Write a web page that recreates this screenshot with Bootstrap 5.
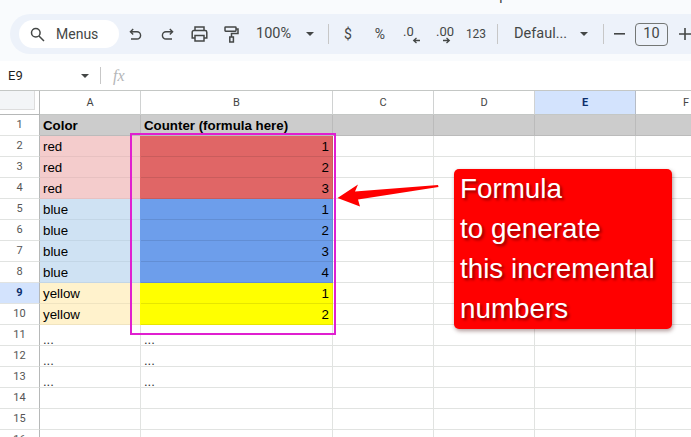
<!DOCTYPE html>
<html lang="en">
<head>
<meta charset="utf-8">
<title>Sheet</title>
<link href="https://cdn.jsdelivr.net/npm/bootstrap@5.3.0/dist/css/bootstrap.min.css" rel="stylesheet">
<style>
html,body{margin:0;background:#fff;overflow:hidden}
.page{position:relative;width:691px;height:437px;overflow:hidden;font-family:Roboto,sans-serif;color:#444746}
.topbar{height:61px;background:#f9fbfd}
.menuline{height:3px;margin-bottom:11px;padding-left:72px;overflow:hidden;font-size:14px;white-space:nowrap;color:#444;word-spacing:10px;letter-spacing:.2px}
.menuline span{display:block;margin-top:-12px;line-height:14px}
.band{height:40px;margin-left:10px;padding-left:9px;background:#edf2fa;border-radius:20px 0 0 20px;white-space:nowrap}
.pill{width:100px;height:28px;padding-left:11px;background:#fff;border-radius:14px;font-size:14px;flex:none}
.pill svg{margin-right:11px}
.tool{width:32px;height:28px;flex:none;font-size:14px}
.tool-sm{font-size:12px}
.tool-minus{width:31px}
.zoomv{width:36px;margin-left:9px;font-size:14.5px;flex:none}
.caret{width:0;height:0;border-left:4px solid transparent;border-right:4px solid transparent;border-top:4px solid #444746;flex:none}
.vsep{width:1px;height:20px;background:#c7c7c7;flex:none}
.dec{width:32px;height:28px;flex:none}
.gap-a{margin-left:14px}
.gap-b{margin-left:3px}
.gap-c{margin-left:5px}
.gap-d{margin-left:12px}
.gap-e{margin-left:15px}
.gap-f{margin-left:1px}
.fname{width:54px;margin-left:16px;font-size:14.5px;flex:none}
.sizebox{width:33px;height:23px;border:1px solid #747775;border-radius:4px;font-size:14.5px;flex:none}
.fxbar{height:29px;background:#fff}
.cellref{width:81px;padding-left:8px;font-size:13px;color:#1f1f1f}
.fxmark{margin-left:12px;font:italic 16px "Liberation Serif",serif;color:#b4b6b8}
.fxsep{margin-left:11px;height:17px}
table.sheet{table-layout:fixed;width:737px;border-collapse:separate;border-spacing:0;font:13.3px "Liberation Sans",Arial,sans-serif;color:#000;border-top:1px solid #c4c7c5}
.sheet td,.sheet th{height:21px;padding:0 3px 1px;border-right:1px solid #e1e3e1;border-bottom:1px solid #e1e3e1;vertical-align:bottom;line-height:16px;overflow:hidden;white-space:nowrap;font-weight:400}
.sheet th.lett{height:24px;padding:0;text-align:center;vertical-align:middle;font:11px Roboto,sans-serif;color:#444;border-bottom-color:#c4c7c5;border-right-color:#d0d2d2}
.sheet th.corner{padding:0;border-right:1px solid #b6b8b8;border-bottom:1px solid #b6b8b8;background:#fff;vertical-align:top}
.cornerfill{display:block;width:35px;height:19px;background:#f3f5f7;border-right:1px solid #ddd;border-bottom:1px solid #ddd}
.sheet th.num{padding:0 0 2px;text-align:center;vertical-align:middle;font:11px Roboto,sans-serif;color:#555;border-right:1px solid #b6b8b8;border-bottom-color:#e1e3e1}
.sheet th.sel{background:#d3e3fd;color:#0b2e6b;font-weight:700}
.sheet th.lett.sel{border-right-color:#b6bcc6}
.h{background:#ccc;font-weight:700!important;border-color:#bbb!important}
.r1{background:#f4cccc;border-color:#e7c1c1!important}.r2{background:#e06666;text-align:right;border-color:#c95c5c!important;box-shadow:-1px 0 0 #e06666}
.b1{background:#cfe2f3;border-color:#c3d6e6!important}.b2{background:#6d9eeb;text-align:right;border-color:#628ed4!important;box-shadow:-1px 0 0 #6d9eeb}
.y1{background:#fff2cc;border-color:#f0e4c0!important}.y2{background:#ff0;text-align:right;border-color:#e6e600!important;box-shadow:-1px 0 0 #ff0}
.sheet td.dots{padding-bottom:0;line-height:10px;font-size:13px;color:#333}
.hilite{position:absolute;left:130px;top:133px;width:206px;height:202px;border:2px solid #e01fd0;pointer-events:none}
.pointer{position:absolute;left:330px;top:178px}
.callout{position:absolute;left:454px;top:169px;width:218px;height:160px;padding:0 6px;background:#f00;border-radius:5px;box-shadow:1px 2px 4px rgba(60,0,0,.4);font:27.8px/40px "Liberation Sans",Arial,sans-serif;color:#fff;text-shadow:2px 2px 3px #8c0000}
</style>
</head>
<body>
<div class="page">
  <div class="topbar">
    <div class="menuline"><span>File Edit View Insert Format Data Tools Extensions Help</span></div>
    <div class="band d-flex align-items-center">
      <div class="pill d-flex align-items-center">
        <svg width="15" height="15" viewBox="0 0 15 15" fill="none" stroke="#444746" stroke-width="1.5"><circle cx="5.8" cy="5.8" r="4.3"/><path d="M9 9l5 5"/></svg><span>Menus</span>
      </div>
      <div class="tool d-flex align-items-center justify-content-center">
        <svg width="13" height="13" viewBox="0 0 13 13" fill="none" stroke="#444746" stroke-width="1.4"><path d="M4.2 1L1.4 3.8l2.8 2.8M1.6 3.8H8a3.4 3.4 0 0 1 0 7.2H2"/></svg>
      </div>
      <div class="tool d-flex align-items-center justify-content-center">
        <svg width="13" height="13" viewBox="0 0 13 13" fill="none" stroke="#444746" stroke-width="1.4"><path d="M8.8 1l2.8 2.8-2.8 2.8M11.4 3.8H5a3.4 3.4 0 0 0 0 7.2h6"/></svg>
      </div>
      <div class="tool d-flex align-items-center justify-content-center">
        <svg width="17" height="16" viewBox="0 0 17 16" fill="none" stroke="#444746" stroke-width="1.5"><path d="M4 4.5V1h9v3.5"/><path d="M4 12H1.2V6.2a1.7 1.7 0 0 1 1.7-1.7h11.2a1.7 1.7 0 0 1 1.7 1.7V12H13"/><path d="M4 9.5h9V15H4z"/></svg>
      </div>
      <div class="tool d-flex align-items-center justify-content-center">
        <svg width="15" height="17" viewBox="0 0 15 17" fill="none" stroke="#444746" stroke-width="1.5"><rect x="1" y="1" width="11" height="4.2" rx=".6"/><path d="M12 3h2v4.5H7.5v3.5"/><rect x="5.8" y="11" width="3.6" height="5"/></svg>
      </div>
      <div class="zoomv">100%</div>
      <div class="caret gap-a"></div>
      <div class="vsep gap-a"></div>
      <div class="tool gap-b d-flex align-items-center justify-content-center">$</div>
      <div class="tool d-flex align-items-center justify-content-center">%</div>
      <div class="dec">
        <svg width="32" height="28" viewBox="0 0 32 28"><text x="7" y="16" font-family="Roboto,sans-serif" font-size="13" fill="#444746">.0</text><path d="M24 20.5h-6M20.5 18l-2.8 2.5 2.8 2.5" fill="none" stroke="#444746" stroke-width="1.3"/></svg>
      </div>
      <div class="dec">
        <svg width="32" height="28" viewBox="0 0 32 28"><text x="8" y="16" font-family="Roboto,sans-serif" font-size="13" fill="#444746">.00</text><path d="M15 20.5h6M18.5 18l2.8 2.5-2.8 2.5" fill="none" stroke="#444746" stroke-width="1.3"/></svg>
      </div>
      <div class="tool tool-sm d-flex align-items-center justify-content-center">123</div>
      <div class="vsep gap-c"></div>
      <div class="fname">Defaul...</div>
      <div class="caret gap-d"></div>
      <div class="vsep gap-e"></div>
      <div class="tool tool-minus d-flex align-items-center justify-content-center"><svg width="11" height="2"><rect width="11" height="1.6" fill="#444746"/></svg></div>
      <div class="sizebox d-flex align-items-center justify-content-center">10</div>
      <div class="tool gap-f d-flex align-items-center justify-content-center"><svg width="12" height="12"><path d="M0 6h12M6 0v12" stroke="#444746" stroke-width="1.6"/></svg></div>
    </div>
  </div>
  <div class="fxbar d-flex align-items-center">
    <div class="cellref">E9</div>
    <div class="caret"></div>
    <div class="vsep fxsep"></div>
    <div class="fxmark">fx</div>
  </div>
  <table class="sheet">
    <colgroup><col style="width:40px"><col style="width:101px"><col style="width:192px"><col style="width:101px"><col style="width:101px"><col style="width:101px"><col style="width:101px"></colgroup>
    <tr><th class="corner"><span class="cornerfill"></span></th><th class="lett">A</th><th class="lett">B</th><th class="lett">C</th><th class="lett">D</th><th class="lett sel">E</th><th class="lett">F</th></tr>
    <tr><th class="num">1</th><td class="h">Color</td><td class="h">Counter (formula here)</td><td class="h"></td><td class="h"></td><td class="h"></td><td class="h"></td></tr>
    <tr><th class="num">2</th><td class="r1">red</td><td class="r2">1</td><td></td><td></td><td></td><td></td></tr>
    <tr><th class="num">3</th><td class="r1">red</td><td class="r2">2</td><td></td><td></td><td></td><td></td></tr>
    <tr><th class="num">4</th><td class="r1">red</td><td class="r2">3</td><td></td><td></td><td></td><td></td></tr>
    <tr><th class="num">5</th><td class="b1">blue</td><td class="b2">1</td><td></td><td></td><td></td><td></td></tr>
    <tr><th class="num">6</th><td class="b1">blue</td><td class="b2">2</td><td></td><td></td><td></td><td></td></tr>
    <tr><th class="num">7</th><td class="b1">blue</td><td class="b2">3</td><td></td><td></td><td></td><td></td></tr>
    <tr><th class="num">8</th><td class="b1">blue</td><td class="b2">4</td><td></td><td></td><td></td><td></td></tr>
    <tr><th class="num sel">9</th><td class="y1">yellow</td><td class="y2">1</td><td></td><td></td><td></td><td></td></tr>
    <tr><th class="num">10</th><td class="y1">yellow</td><td class="y2">2</td><td></td><td></td><td></td><td></td></tr>
    <tr><th class="num">11</th><td class="dots">...</td><td class="dots">...</td><td></td><td></td><td></td><td></td></tr>
    <tr><th class="num">12</th><td class="dots">...</td><td class="dots">...</td><td></td><td></td><td></td><td></td></tr>
    <tr><th class="num">13</th><td class="dots">...</td><td class="dots">...</td><td></td><td></td><td></td><td></td></tr>
    <tr><th class="num">14</th><td></td><td></td><td></td><td></td><td></td><td></td></tr>
    <tr><th class="num">15</th><td></td><td></td><td></td><td></td><td></td><td></td></tr>
    <tr><th class="num">16</th><td></td><td></td><td></td><td></td><td></td><td></td></tr>
  </table>
  <div class="hilite"></div>
  <svg class="pointer" width="112" height="32" viewBox="330 178 112 32"><path d="M337.5 198L358 184.5 355 191.5 438 185 438.5 187 358 199.5 360 206.5z" fill="#f00"/></svg>
  <div class="callout">Formula<br>to generate<br>this incremental<br>numbers</div>
</div>
<script src="https://cdn.jsdelivr.net/npm/bootstrap@5.3.0/dist/js/bootstrap.bundle.min.js"></script>
</body>
</html>
